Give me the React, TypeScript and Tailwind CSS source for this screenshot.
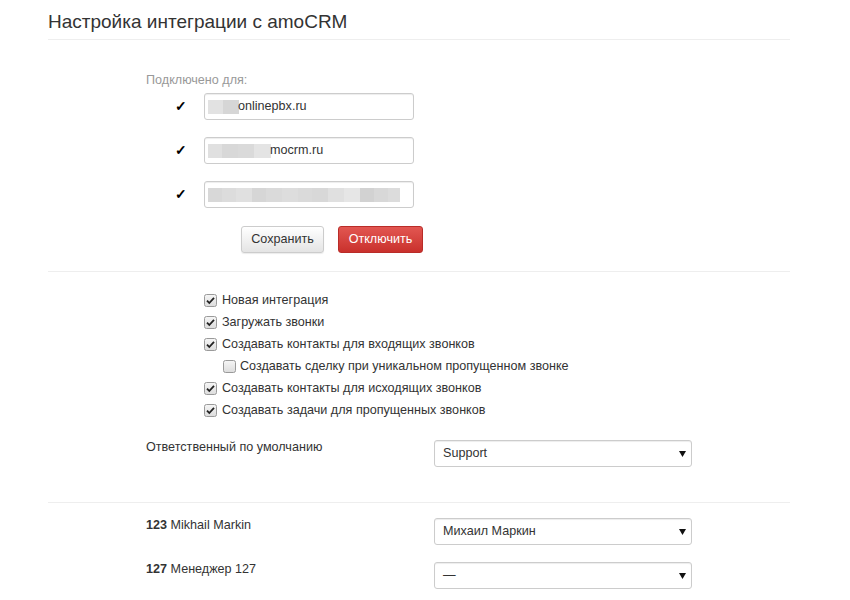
import React from 'react'

const font = { fontFamily: '"Liberation Sans", Arial, sans-serif' }

function Blur({ widths }: { widths: [number, string][] }) {
  return (
    <span className="flex h-[14px]">
      {widths.map(([w, c], i) => (
        <span key={i} className="h-full" style={{ width: w, background: c }} />
      ))}
    </span>
  )
}

function DomainInput({ blur, text }: { blur: [number, string][]; text?: string }) {
  return (
    <div className="flex items-center pl-[29px]">
      <span className="w-[29px] text-[14px] font-bold text-black">✓</span>
      <div className="flex h-[27px] w-[210px] items-center rounded-[3px] border border-[#ccc] pl-[3px] text-[12.6px] text-[#333] shadow-[inset_0_1px_1px_rgba(0,0,0,0.075)]">
        <Blur widths={blur} />
        {text && <span className="-ml-px">{text}</span>}
      </div>
    </div>
  )
}

function Box({ checked }: { checked: boolean }) {
  return (
    <svg width="13" height="13" viewBox="0 0 13 13" className="shrink-0">
      <defs>
        <linearGradient id="cb" x1="0" y1="0" x2="0" y2="1">
          <stop offset="0" stopColor="#f6f6f6" />
          <stop offset="1" stopColor="#dcdcdc" />
        </linearGradient>
      </defs>
      <rect x="0.5" y="0.5" width="12" height="12" rx="2" fill="url(#cb)" stroke="#9a9a9a" />
      {checked && (
        <path d="M3 6.6 L5.3 9 L10 3.8" fill="none" stroke="#222" strokeWidth="1.8" />
      )}
    </svg>
  )
}

function Check({ label, checked = true, indent = false }: { label: string; checked?: boolean; indent?: boolean }) {
  return (
    <label
      className={`flex h-[22px] items-center text-[12.6px] text-[#333] ${
        indent ? 'gap-[4px] pl-[77px]' : 'gap-[5px] pl-[58px]'
      }`}
    >
      <Box checked={checked} />
      <span>{label}</span>
    </label>
  )
}

function Select({ value }: { value: string }) {
  return (
    <div className="flex h-[27px] w-[258px] items-center justify-between rounded-[3px] border border-[#ccc] pl-[8px] pr-[5px] text-[12.6px] text-[#333] shadow-[inset_0_1px_1px_rgba(0,0,0,0.075)]">
      <span>{value}</span>
      <svg width="7" height="6" viewBox="0 0 7 6">
        <path d="M0 0 H7 L3.5 6 Z" fill="#111" />
      </svg>
    </div>
  )
}

function SelectRow({ label, value }: { label: React.ReactNode; value: string }) {
  return (
    <div className="flex items-start">
      <div className="-mt-[2px] w-[288px] text-[12.6px] leading-[18px] text-[#333]">{label}</div>
      <Select value={value} />
    </div>
  )
}

export default function App() {
  return (
    <div className="min-h-[600px] bg-white" style={font}>
      <div className="ml-[48px] w-[742px]">
        <h1 className="pt-[10px] text-[19px] leading-[24px] text-[#333]">Настройка интеграции с amoCRM</h1>
        <div className="mt-[5px] border-t border-[#eee]" />

        <div className="pl-[98px]">
          <p className="mt-[31px] text-[12.6px] leading-[18px] text-[#999]">Подключено для:</p>
          <div className="mt-[4px] flex flex-col gap-[17px]">
            <DomainInput
              blur={[
                [15, '#e2e2e2'],
                [16, '#d6d6d6'],
              ]}
              text="onlinepbx.ru"
            />
            <DomainInput
              blur={[
                [14, '#e0e0e0'],
                [16, '#d8d8d8'],
                [16, '#dadada'],
                [17, '#e4e4e4'],
              ]}
              text="mocrm.ru"
            />
            <DomainInput
              blur={[
                [14, '#d8d8d8'],
                [14, '#dcdcdc'],
                [16, '#e0e0e0'],
                [14, '#d6d6d6'],
                [16, '#dadada'],
                [16, '#dddddd'],
                [14, '#dadada'],
                [16, '#d8d8d8'],
                [16, '#e0e0e0'],
                [16, '#e6e6e6'],
                [14, '#d2d2d2'],
                [14, '#d8d8d8'],
                [12, '#dcdcdc'],
              ]}
            />
          </div>
          <div className="mt-[18px] flex gap-[14px] pl-[95px]">
            <button className="h-[27px] w-[83px] rounded-[3px] border border-[#ccc] bg-gradient-to-b from-white to-[#e4e4e4] text-[12.6px] text-[#333] shadow-[0_1px_1px_rgba(0,0,0,0.08)]">
              Сохранить
            </button>
            <button className="h-[27px] w-[85px] rounded-[3px] border border-[#b92c28] bg-gradient-to-b from-[#e25651] to-[#c9302c] text-[12.6px] text-white">
              Отключить
            </button>
          </div>
        </div>
        <div className="mt-[18px] border-t border-[#eee]" />

        <div className="pl-[98px]">
          <div className="mt-[17px]">
            <Check label="Новая интеграция" />
            <Check label="Загружать звонки" />
            <Check label="Создавать контакты для входящих звонков" />
            <Check label="Создавать сделку при уникальном пропущенном звонке" checked={false} indent />
            <Check label="Создавать контакты для исходящих звонков" />
            <Check label="Создавать задачи для пропущенных звонков" />
          </div>
          <div className="mt-[19px]">
            <SelectRow label="Ответственный по умолчанию" value="Support" />
          </div>
        </div>
        <div className="mt-[35px] border-t border-[#eee]" />

        <div className="mt-[15px] flex flex-col gap-[17px] pl-[98px]">
          <SelectRow
            label={
              <>
                <b>123</b> Mikhail Markin
              </>
            }
            value="Михаил Маркин"
          />
          <SelectRow
            label={
              <>
                <b>127</b> Менеджер 127
              </>
            }
            value="—"
          />
        </div>
      </div>
    </div>
  )
}
